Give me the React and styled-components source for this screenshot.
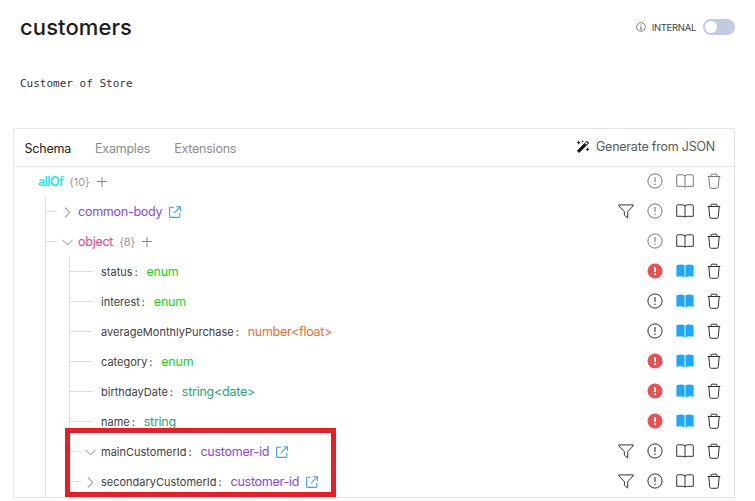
import React from "react";
import styled, { createGlobalStyle } from "styled-components";

const GlobalStyle = createGlobalStyle`
  * { box-sizing: border-box; }
  body {
    margin: 0;
    background: #fff;
    font-family: Inter, "Liberation Sans", sans-serif;
    color: #262626;
  }
  svg { display: block; flex: none; }
`;

const Page = styled.main`
  position: relative;
  width: 755px;
  height: 501px;
  padding: 0 20px 0 13px;
  overflow: hidden;
`;

const Header = styled.header`
  display: flex;
  align-items: center;
  justify-content: space-between;
  height: 54px;
  padding-left: 7px;
`;

const Title = styled.h1`
  margin: 0;
  font-size: 22px;
  font-weight: 450;
  line-height: 30px;
  letter-spacing: 0.1px;
  color: #1c1c1c;
`;

const Visibility = styled.div`
  display: flex;
  align-items: center;
  font-size: 9.5px;
  color: #404040;
`;

const VisibilityLabel = styled.span`
  margin: 1px 7px 0 6px;
  line-height: 14px;
  letter-spacing: -0.3px;
`;

const Toggle = styled.button`
  width: 32px;
  height: 16px;
  padding: 2px;
  border: 0;
  border-radius: 8px;
  background: #c1cce3;
`;

const Knob = styled.span`
  display: block;
  width: 12px;
  height: 12px;
  border-radius: 50%;
  background: #fff;
`;

const Description = styled.p`
  height: 74px;
  margin: 0;
  padding: 22px 0 0 7px;
  font: 11px/15px "DejaVu Sans Mono", monospace;
  color: #333;
`;

const Card = styled.section`
  height: 370px;
  border: 1px solid #e3e6ee;
  border-radius: 2px 2px 0 0;
`;

const TabBar = styled.nav`
  display: flex;
  align-items: center;
  height: 38px;
  padding: 2px 19px 0 10.5px;
  border-bottom: 1px solid #e3e6ee;
  font-size: 12.5px;
  letter-spacing: -0.22px;
`;

const Tab = styled.span`
  margin-right: 24px;
  color: ${(p) => (p.$active ? "#222" : "#8c8c8c")};
`;

const Generate = styled.div`
  display: flex;
  align-items: center;
  gap: 6px;
  margin: -4px 0 0 auto;
  color: #595959;
`;

const Row = styled.div`
  display: flex;
  align-items: center;
  height: 30px;
  padding: 0 6.5px 0 24px;
`;

const Guide = styled.span`
  display: flex;
  align-items: center;
  align-self: stretch;
  flex: none;
  width: ${(p) => p.$width}px;
  border-left: 1px solid #d9deea;
  &:first-child { margin-left: 7px; }
`;

const Branch = styled.span`
  width: ${(p) => p.$length}px;
  height: 1px;
  margin-top: -1px;
  background: #d9deea;
`;

const Chevron = styled.span`
  display: flex;
  justify-content: center;
  flex: none;
  width: 13px;
  margin-right: 4px;
`;

const PropName = styled.span`
  font-size: 11px;
  line-height: 18px;
  color: #404040;
`;

const Colon = styled.span`
  width: 12px;
  margin-left: 2px;
  font-size: 11px;
  line-height: 18px;
  color: #404040;
`;

const TypeName = styled.span`
  font-size: 12.5px;
  line-height: 18px;
  font-weight: ${(p) => p.$weight || 400};
  letter-spacing: ${(p) => p.$spacing || -0.25}px;
  color: ${(p) => p.$color};
`;

const Count = styled.span`
  margin: 0 7px 0 6px;
  font-size: 11px;
  line-height: 18px;
  letter-spacing: -0.1px;
  color: #999;
`;

const LinkSlot = styled.span`
  margin: -1px 0 0 7px;
`;

const Actions = styled.div`
  display: grid;
  grid-template-columns: 28px 30px 30px 28px;
  align-items: center;
  justify-items: center;
  margin: -1.5px 0 0 auto;
  color: ${(p) => (p.$muted ? "#777" : "#303030")};
`;

const Action = styled.span`
  display: flex;
  justify-content: center;
  color: ${(p) => p.$color || "inherit"};
`;

const Highlight = styled.div`
  position: absolute;
  left: 65px;
  top: 428px;
  width: 271px;
  height: 69px;
  border: 5px solid #ec1c24;
`;

const AlertIcon = ({ filled }) => (
  <svg width="16" height="16" viewBox="0 0 16 16" fill="none">
    <circle cx="8" cy="8" r={filled ? 7.5 : 7.1} fill={filled ? "#f04f4f" : "none"} stroke={filled ? "none" : "currentColor"} />
    <path d="M8 4v5" stroke={filled ? "#fff" : "currentColor"} strokeWidth={filled ? 2 : 1.1} />
    <circle cx="8" cy="11.2" r={filled ? 1.1 : 0.75} fill={filled ? "#fff" : "currentColor"} />
  </svg>
);

const BookIcon = ({ filled }) =>
  filled ? (
    <svg width="18" height="14" viewBox="0 0 18 14" fill="#1ba8ff">
      <path d="M.4 1.5Q4.5-.2 8.6 1.2v12.2Q4.6 11.6.4 12.8zM9.5 1.2Q13.5-.2 17.6 1.5v11.3q-4.2-1.2-8.1.6z" />
    </svg>
  ) : (
    <svg width="18" height="14" viewBox="0 0 18 14" fill="none" stroke="currentColor" strokeWidth="1" strokeLinejoin="round">
      <path d="M9 1.8Q7.8.8 6.2.8H2.1Q.7.8.7 2.1v10.2h5.4q2 0 2.9.9.9-.9 2.9-.9h5.4V2.1q0-1.3-1.4-1.3h-4.1Q10.2.8 9 1.8zV13" />
    </svg>
  );

const TrashIcon = () => (
  <svg width="14" height="16" viewBox="0 0 14 16" fill="none" stroke="currentColor" strokeWidth="1" strokeLinejoin="round">
    <path d="M.7 3.5h12.6M3.7 3.3l.8-2.1h5l.8 2.1M1.8 3.7l.9 10q.1 1.6 1.6 1.6h5.4q1.5 0 1.6-1.6l.9-10" />
  </svg>
);

const FilterIcon = () => (
  <svg width="16" height="15" viewBox="0 0 16 15" fill="none" stroke="currentColor" strokeWidth="1" strokeLinejoin="round">
    <path d="M.8.9h14.4v1L9.7 7.7V14L6.4 11.2V7.7L.8 1.900z" />
  </svg>
);

const LinkIcon = () => (
  <svg width="12" height="12" viewBox="0 0 12 12" fill="none" stroke="#409eff" strokeWidth="1.1">
    <path d="M5 1.200H1.400q-.8 0-.8.8v8.600q0 .8.8.8h8.600q.8 0 .8-.8V7M7.200.700h4.200v4.200M11.200.900 5 7.100" />
  </svg>
);

const PlusIcon = () => (
  <svg width="10" height="10" viewBox="0 0 10 10" stroke="#888">
    <path d="M0 4.500h10M5 0v10" />
  </svg>
);

const ChevronIcon = ({ open }) => (
  <svg width={open ? 11 : 7} height={open ? 7 : 11} viewBox={open ? "0 0 11 7" : "0 0 7 11"} fill="none" stroke="#aaa" strokeWidth="1.1">
    <path d={open ? "m.5.8 5 5 5-5" : "m.8.5 5 5-5 5"} />
  </svg>
);

const InfoIcon = () => (
  <svg width="10" height="10" viewBox="0 0 10 10" fill="none" stroke="#666" strokeWidth=".8">
    <circle cx="5" cy="5" r="4.3" />
    <path d="M4 4.400h1v2.800M3.800 7.200h2.500M4.500 2.700h1" />
  </svg>
);

const WandIcon = () => (
  <svg width="14" height="13" viewBox="0 0 14 13" fill="#111">
    <path d="m1.300 10.800 9.600-9.600 1.800 1.800-9.600 9.600z" stroke="#111" strokeWidth=".8" />
    <path d="m8.900 3.600 1.700-1.700 1.200 1.200-1.700 1.700z" fill="#fff" />
    <path d="m2.600.600.6 1.500 1.500.6-1.500.6-.6 1.500-.6-1.500-1.500-.6 1.500-.6zM6.600 0l.4.900.9.400-.9.400-.4.900-.4-.9-.9-.4.900-.4zM11.500 7.300l.6 1.500 1.500.6-1.500.6-.6 1.500-.6-1.500-1.500-.6 1.500-.6z" />
  </svg>
);

const green = "#11d911";
const purple = "#8249f7";
const teal = "#1fa870";

const rows = [
  { depth: 0, type: "allOf", color: "#22e9ee", weight: 600, spacing: -0.6, count: "{10}", muted: true },
  { depth: 1, chevron: "closed", type: "common-body", color: purple, link: true, filter: true, mutedAlert: true },
  { depth: 1, chevron: "open", type: "object", color: "#f5407c", count: "{8}", mutedAlert: true },
  { depth: 2, name: "status", type: "enum", color: green, required: true, described: true },
  { depth: 2, name: "interest", type: "enum", color: green, described: true },
  { depth: 2, name: "averageMonthlyPurchase", type: "number<float>", color: "#f56b32", described: true },
  { depth: 2, name: "category", type: "enum", color: green, required: true, described: true },
  { depth: 2, name: "birthdayDate", type: "string<date>", color: teal, required: true, described: true },
  { depth: 2, name: "name", type: "string", color: teal, required: true, described: true },
  { depth: 2, chevron: "open", name: "mainCustomerId", type: "customer-id", color: purple, link: true, filter: true },
  { depth: 2, chevron: "closed", name: "secondaryCustomerId", type: "customer-id", color: purple, link: true, filter: true },
];

function SchemaRow({ row }) {
  return (
    <Row>
      {row.depth === 1 && <Guide $width={16}><Branch $length={11} /></Guide>}
      {row.depth === 2 && (
        <>
          <Guide $width={24} />
          <Guide $width={row.chevron ? 15 : 32}><Branch $length={row.chevron ? 11 : 23} /></Guide>
        </>
      )}
      {row.chevron && <Chevron><ChevronIcon open={row.chevron === "open"} /></Chevron>}
      {row.name && (
        <>
          <PropName>{row.name}</PropName>
          <Colon>:</Colon>
        </>
      )}
      <TypeName $color={row.color} $weight={row.weight} $spacing={row.spacing}>{row.type}</TypeName>
      {row.count && <><Count>{row.count}</Count><PlusIcon /></>}
      {row.link && <LinkSlot><LinkIcon /></LinkSlot>}
      <Actions $muted={row.muted}>
        <Action>{row.filter && <FilterIcon />}</Action>
        <Action $color={row.mutedAlert ? "#777" : undefined}><AlertIcon filled={row.required} /></Action>
        <Action><BookIcon filled={row.described} /></Action>
        <Action><TrashIcon /></Action>
      </Actions>
    </Row>
  );
}

export default function App() {
  return (
    <Page>
      <GlobalStyle />
      <Header>
        <Title>customers</Title>
        <Visibility>
          <InfoIcon />
          <VisibilityLabel>INTERNAL</VisibilityLabel>
          <Toggle aria-label="Internal"><Knob /></Toggle>
        </Visibility>
      </Header>
      <Description>Customer of Store</Description>
      <Card>
        <TabBar>
          <Tab $active>Schema</Tab>
          <Tab>Examples</Tab>
          <Tab>Extensions</Tab>
          <Generate><WandIcon />Generate from JSON</Generate>
        </TabBar>
        {rows.map((row, i) => <SchemaRow key={i} row={row} />)}
      </Card>
      <Highlight />
    </Page>
  );
}
